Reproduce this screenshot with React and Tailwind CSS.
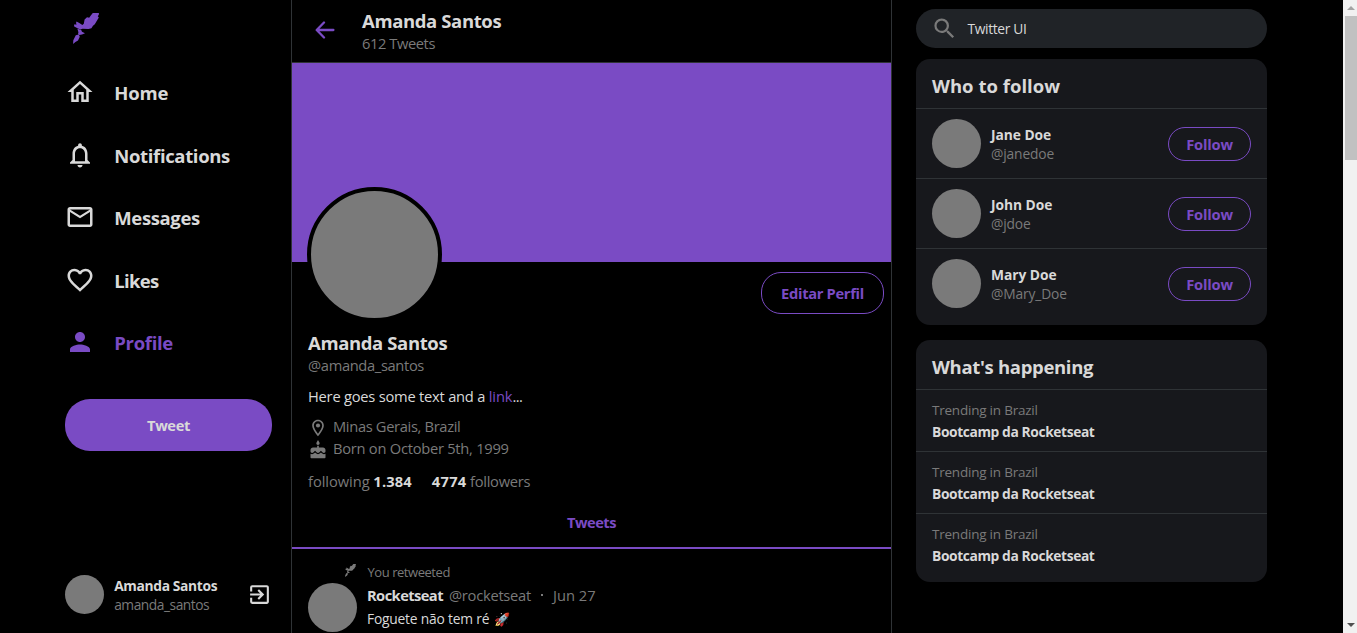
import {
  MdOutlineHome,
  MdNotificationsNone,
  MdMailOutline,
  MdFavoriteBorder,
  MdPerson,
  MdExitToApp,
  MdSearch,
  MdOutlineLocationOn,
  MdCake,
} from "react-icons/md";

function RocketLogo({ className }) {
  return (
    <svg viewBox="0 0 26 31" className={className} fill="currentColor" aria-hidden="true">
      <path d="M19.8 0L25.9 0 25.9 1.4 24.8 3.2 25.8 4.6 21.8 11.2 20 12.8 18.4 15.2 15.5 16 9.6 15.8 7.4 16.4 5 15.4 1.2 13.6 1 11.4 3.6 11.6 3 10 3.5 8.4 6.3 10 9.4 12 10.8 10.8 11.6 6.4 14 4.2 16.2 4.8 17.8 2.6Z" />
      <path d="M4.4 15.8L8.2 17 9 18.8 12 20.3 9 21.4 6.4 21.9 5 21.2 5.4 19.2Z" />
      <path d="M2.8 22.2L5.8 21.4 6.8 23.8 5 27.6 2.4 29 .1 31 .3 27.2Z" />
    </svg>
  );
}

function BackArrow() {
  return (
    <svg viewBox="0 0 20 18" className="h-[18px] w-5" fill="none" stroke="currentColor" strokeWidth="2.3" strokeLinecap="round" strokeLinejoin="round" aria-hidden="true">
      <path d="M9 1.5L1.7 9L9 16.5M2 9H18.4" />
    </svg>
  );
}

const nav = [
  { label: "Home", Icon: MdOutlineHome, tracking: "tracking-[-0.15px]" },
  { label: "Notifications", Icon: MdNotificationsNone, tracking: "tracking-[-0.35px]" },
  { label: "Messages", Icon: MdMailOutline, tracking: "tracking-[-0.38px]" },
  { label: "Likes", Icon: MdFavoriteBorder, tracking: "tracking-[-0.7px]" },
  { label: "Profile", Icon: MdPerson, active: true, tracking: "tracking-[-0.32px]" },
];

const people = [
  { name: "Jane Doe", handle: "@janedoe" },
  { name: "John Doe", handle: "@jdoe" },
  { name: "Mary Doe", handle: "@Mary_Doe" },
];

function Sidebar() {
  return (
    <aside className="flex w-[291px] shrink-0 flex-col pl-[65px] pr-[19px]">
      <RocketLogo className="ml-2 mt-[13px] h-[31px] w-[26px] text-[#7a4bc4]" />
      <nav className="mt-[17px] flex flex-col">
        {nav.map(({ label, Icon, active, tracking }) => (
          <a
            key={label}
            className={`flex h-[62.5px] items-center gap-[19.3px] ${active ? "text-[#7a4bc4]" : "text-[#d9d9d9]"}`}
          >
            <Icon className="size-[30px]" />
            <span className={`pt-[2px] text-[18.5px] font-bold leading-6 ${tracking}`}>{label}</span>
          </a>
        ))}
      </nav>
      <button className="mt-[25.5px] h-[52px] rounded-[25px] bg-[#7a4bc4] pt-px text-[14.7px] font-bold tracking-[-0.4px]">
        Tweet
      </button>
      <div className="mb-[19px] mt-auto flex items-center">
        <div className="size-[39px] rounded-full bg-[#7a7a7a]" />
        <div className="ml-[10.2px] flex flex-col pt-px">
          <strong className="text-[13.8px] font-bold leading-[19px] tracking-[-0.35px]">Amanda Santos</strong>
          <span className="text-[13.8px] leading-[19px] tracking-[-0.48px] text-[#7a7a7a]">amanda_santos</span>
        </div>
        <MdExitToApp className="ml-auto size-[25px]" />
      </div>
    </aside>
  );
}

function Profile() {
  return (
    <main className="flex w-[601px] shrink-0 flex-col overflow-hidden border-x border-[#2f3336]">
      <header className="flex h-[63px] shrink-0 items-center border-b border-[#2f3336] pl-[23px]">
        <div className="pb-0.5 text-[#7a4bc4]">
          <BackArrow />
        </div>
        <div className="ml-[27px] flex flex-col pt-px">
          <strong className="text-[18.5px] font-bold leading-[23px] tracking-[-0.38px]">Amanda Santos</strong>
          <span className="text-[14.7px] leading-[22px] tracking-[-0.42px] text-[#7a7a7a]">612 Tweets</span>
        </div>
      </header>

      <div className="h-[199px] shrink-0 bg-[#7a4bc4]" />

      <section className="flex shrink-0 flex-col px-4">
        <div className="flex h-[70px] items-start justify-between">
          <div className="-ml-px -mt-[75px] size-[135px] shrink-0 rounded-full border-4 border-black bg-[#7a7a7a]" />
          <button className="-mr-[9px] mt-2.5 h-[42px] w-[123px] rounded-[20px] border border-[#7a4bc4] text-[14.7px] font-bold tracking-[-0.32px] text-[#7a4bc4]">
            Editar Perfil
          </button>
        </div>
        <h1 className="text-[18.5px] font-bold leading-[22px] tracking-[-0.38px]">Amanda Santos</h1>
        <h2 className="text-[14.7px] leading-[23px] tracking-[-0.35px] text-[#7a7a7a]">@amanda_santos</h2>
        <p className="mt-2 text-[14.7px] leading-[22px] tracking-[-0.23px]">
          Here goes some text and a <a className="tracking-[-0.1px] text-[#7a4bc4]">link</a>
          <span className="tracking-[-0.6px]">...</span>
        </p>
        <ul className="mt-2 flex flex-col text-[14.7px] leading-[22px] text-[#7a7a7a]">
          <li className="flex h-[22px] items-center gap-[5px]">
            <MdOutlineLocationOn className="mt-[3px] size-5" />
            <span className="tracking-[-0.34px]">Minas Gerais, Brazil</span>
          </li>
          <li className="flex h-[22px] items-center gap-[5px]">
            <MdCake className="mt-[3px] size-5" />
            <span className="tracking-[-0.26px]">Born on October 5th, 1999</span>
          </li>
        </ul>
        <div className="mt-[11px] flex gap-5 text-[14.7px] leading-[22px] text-[#7a7a7a]">
          <span className="tracking-[-0.06px]">
            following <strong className="font-bold tracking-[0.15px] text-[#d9d9d9]">1.384</strong>
          </span>
          <span className="tracking-[-0.27px]">
            <strong className="font-bold tracking-[0.25px] text-[#d9d9d9]">4774</strong> followers
          </span>
        </div>
      </section>

      <div className="mt-[5px] flex h-[52px] shrink-0 items-center justify-center border-b-2 border-[#7a4bc4] pt-px text-[14.7px] font-bold tracking-[-0.55px] text-[#7a4bc4]">
        Tweets
      </div>

      <article className="flex shrink-0 flex-col px-4 pt-[13px]">
        <div className="flex h-[21px] items-center text-[13px] tracking-[-0.45px] text-[#7a7a7a]">
          <RocketLogo className="mb-1 ml-[37px] h-[13px] w-[11px]" />
          <span className="ml-[11.5px]">You retweeted</span>
        </div>
        <div className="flex gap-2.5">
          <div className="size-[49px] shrink-0 rounded-full bg-[#7a7a7a]" />
          <div className="flex flex-col">
            <div className="flex items-center text-[14.7px] leading-[24px] text-[#7a7a7a]">
              <strong className="font-bold tracking-[-0.58px] text-[#d9d9d9]">Rocketseat</strong>
              <span className="ml-[6px] tracking-[-0.26px]">@rocketseat</span>
              <span className="mx-2.5 size-0.5 bg-[#7a7a7a]" />
              <time>Jun 27</time>
            </div>
            <p className="pt-px text-[13.8px] leading-[22px] tracking-[-0.2px]">
              Foguete não tem ré <span className="ml-px text-[13px]">🚀</span>
            </p>
          </div>
        </div>
      </article>
    </main>
  );
}

function Aside() {
  return (
    <aside className="ml-6 flex w-[351px] shrink-0 flex-col pt-[9px]">
      <div className="flex h-[39px] items-center rounded-[19.5px] bg-[#202327] pl-[15px]">
        <MdSearch className="size-[27px] text-[#7a7a7a]" />
        <span className="ml-[9.5px] pt-px text-[13.8px] tracking-[-0.35px]">Twitter UI</span>
      </div>

      <section className="mt-[11px] h-[266px] rounded-[14px] bg-[#17181c]">
        <h3 className="flex h-[50px] items-center border-b border-[#2f3336] px-4 pt-[4px] text-[18.5px] font-bold tracking-[0.02px]">
          Who to follow
        </h3>
        {people.map(({ name, handle }) => (
          <div key={name} className="flex h-[70px] items-center border-b border-[#2f3336] px-4 last:h-[69px] last:border-b-0">
            <div className="size-[49px] rounded-full bg-[#7a7a7a]" />
            <div className="ml-2.5 flex flex-col pt-px">
              <strong className="text-[13.8px] font-bold leading-[19px] tracking-[-0.05px]">{name}</strong>
              <span className="text-[13.8px] leading-[19px] tracking-[-0.15px] text-[#7a7a7a]">{handle}</span>
            </div>
            <button className="ml-auto mt-px h-[34px] w-[83px] rounded-[17px] border border-[#7a4bc4] pt-px text-[14.7px] font-bold tracking-[-0.2px] text-[#7a4bc4]">
              Follow
            </button>
          </div>
        ))}
      </section>

      <section className="mt-[15px] h-[242px] rounded-[14px] bg-[#17181c]">
        <h3 className="flex h-[50px] items-center border-b border-[#2f3336] px-4 pt-[4px] text-[18.5px] font-bold tracking-[-0.32px]">
          What's happening
        </h3>
        {[0, 1, 2].map((i) => (
          <div key={i} className="flex h-[62px] flex-col border-b border-[#2f3336] px-4 pt-[9px] last:border-b-0">
            <span className="text-[13.5px] leading-[22px] tracking-[-0.22px] text-[#7a7a7a]">Trending in Brazil</span>
            <strong className="text-[13.8px] font-bold leading-[22px] tracking-[-0.39px]">Bootcamp da Rocketseat</strong>
          </div>
        ))}
      </section>
    </aside>
  );
}

function Scrollbar() {
  return (
    <div className="ml-auto flex w-[14px] shrink-0 flex-col bg-[#f1f1f1] pl-0.5">
      <div className="flex h-4 items-center justify-center">
        <svg viewBox="0 0 8 4" className="h-1 w-2 fill-[#a3a3a3]"><path d="M0 4L4 0L8 4Z" /></svg>
      </div>
      <div className="h-36 bg-[#c1c1c1]" />
      <div className="mt-auto flex h-4 items-center justify-center">
        <svg viewBox="0 0 8 4" className="h-1 w-2 fill-[#505050]"><path d="M0 0L4 4L8 0Z" /></svg>
      </div>
    </div>
  );
}

export default function App() {
  return (
    <div className="flex h-[633px] w-[1357px] overflow-hidden bg-black font-['Open_Sans',sans-serif] text-[#d9d9d9]">
      <Sidebar />
      <Profile />
      <Aside />
      <Scrollbar />
    </div>
  );
}
